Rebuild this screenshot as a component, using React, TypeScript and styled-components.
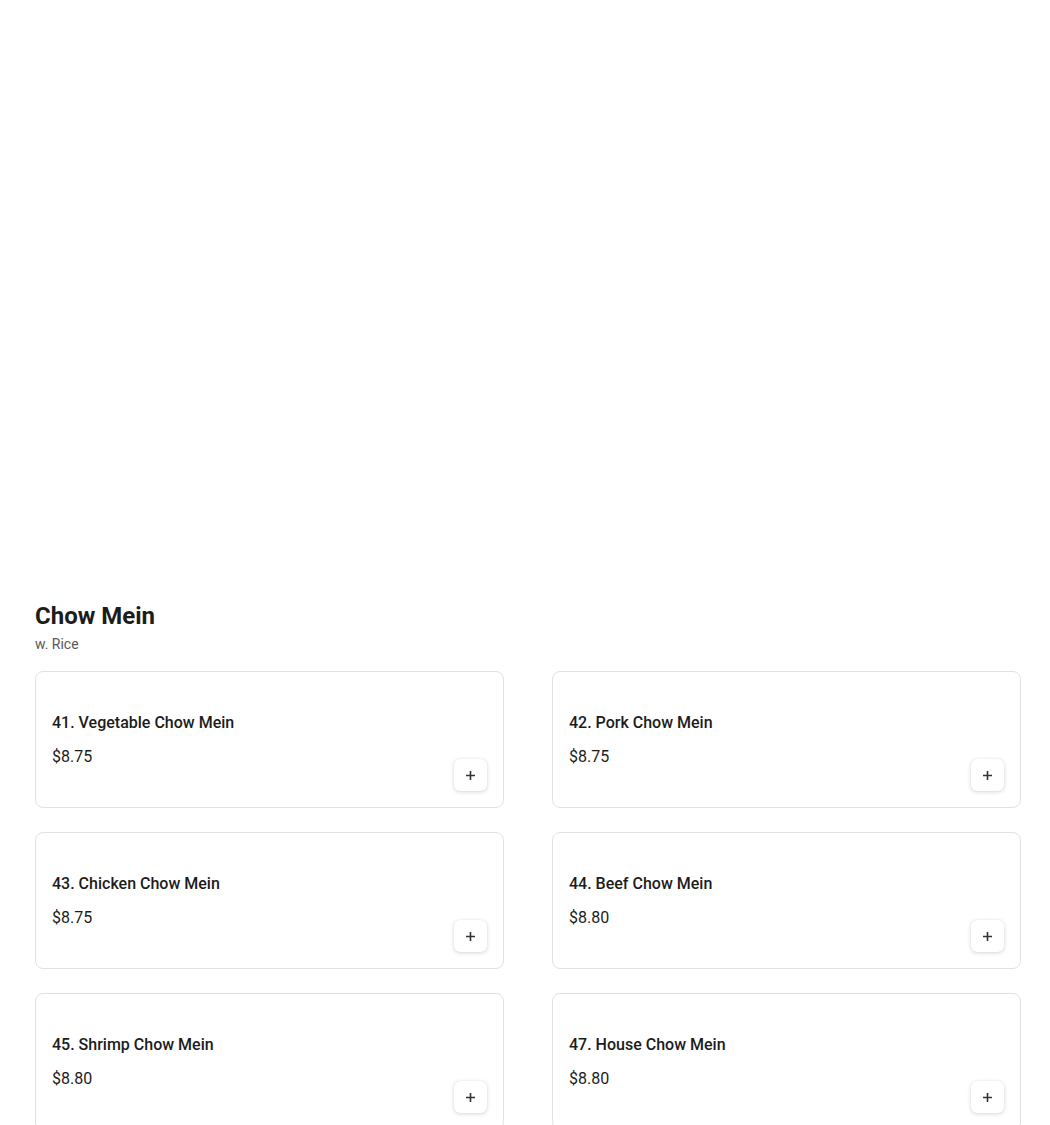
import React from "react";
import styled, { createGlobalStyle } from "styled-components";

const Global = createGlobalStyle`
  html, body { margin: 0; padding: 0; background: #ffffff; }
  body { font-family: Roboto, "Liberation Sans", Arial, sans-serif; color: #1f1f1f; }
  * { box-sizing: border-box; }
`;

const Page = styled.div`
  padding: 600px 29px 40px 35px;
`;

const Section = styled.section`
  display: flex;
  flex-direction: column;
`;

const Heading = styled.h2`
  margin: 0;
  font-size: 24px;
  line-height: 32px;
  font-weight: 700;
  color: #1c1c1c;
`;

const Sub = styled.p`
  margin: 2px 0 17px;
  font-size: 14px;
  line-height: 20px;
  color: #595959;
`;

const Grid = styled.div`
  display: grid;
  grid-template-columns: 1fr 1fr;
  column-gap: 48px;
  row-gap: 24px;
`;

const Card = styled.div`
  height: 137px;
  border: 1px solid #e2e2e2;
  border-radius: 8px;
  padding: 16px;
  display: flex;
  justify-content: space-between;
  align-items: flex-end;
  background: #fff;
`;

const Info = styled.div`
  align-self: flex-start;
  padding-top: 23px;
  display: flex;
  flex-direction: column;
  gap: 10px;
`;

const Title = styled.div`
  font-size: 16px;
  line-height: 24px;
  font-weight: 500;
  color: #1c1c1c;
`;

const Price = styled.div`
  font-size: 16px;
  line-height: 24px;
  font-weight: 400;
  color: #1c1c1c;
`;

const AddButton = styled.button`
  width: 33px;
  height: 32px;
  border: none;
  border-radius: 6px;
  background: #fff;
  box-shadow: 0 1px 4px rgba(0, 0, 0, 0.16), 0 0 1px rgba(0, 0, 0, 0.1);
  display: flex;
  align-items: center;
  justify-content: center;
  padding: 0;
  cursor: pointer;
  color: #333;
`;

const items = [
  { name: "41. Vegetable Chow Mein", price: "$8.75" },
  { name: "42. Pork Chow Mein", price: "$8.75" },
  { name: "43. Chicken Chow Mein", price: "$8.75" },
  { name: "44. Beef Chow Mein", price: "$8.80" },
  { name: "45. Shrimp Chow Mein", price: "$8.80" },
  { name: "47. House Chow Mein", price: "$8.80" },
];

const Plus = () => (
  <svg width="11" height="11" viewBox="0 0 11 11" fill="none">
    <path d="M5.5 1v9M1 5.5h9" stroke="#333" strokeWidth="1.6" />
  </svg>
);

export default function App() {
  return (
    <>
      <Global />
      <Page>
        <Section>
          <Heading>Chow Mein</Heading>
          <Sub>w. Rice</Sub>
          <Grid>
            {items.map((it) => (
              <Card key={it.name}>
                <Info>
                  <Title>{it.name}</Title>
                  <Price>{it.price}</Price>
                </Info>
                <AddButton aria-label="Add">
                  <Plus />
                </AddButton>
              </Card>
            ))}
          </Grid>
        </Section>
      </Page>
    </>
  );
}
